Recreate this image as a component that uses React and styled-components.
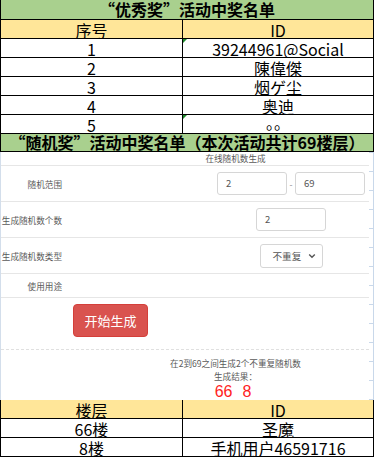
import * as React from 'react'
import styled, { createGlobalStyle } from 'styled-components'

const Global = createGlobalStyle`
    html, body {
        margin: 0;
        padding: 0;
        background: #fff;
    }
    * {
        box-sizing: border-box;
    }
`

const Sheet = styled.div`
    width: 374px;
    font-family: "Noto Sans CJK SC", "Noto Sans", sans-serif;
    color: #000;
`

const Table = styled.div`
    display: grid;
    grid-template-columns: 182px 1fr;
    border-left: 1px solid #000;
    border-right: 1px solid #000;
`

const Title = styled.div`
    grid-column: 1 / -1;
    height: ${p => p.$h}px;
    line-height: ${p => p.$h - 1}px;
    border-bottom: 1px solid #000;
    background: #a9d08e;
    text-align: center;
    font-size: 16px;
    font-weight: 700;
    white-space: nowrap;
`

const Cell = styled.div`
    position: relative;
    height: 19px;
    line-height: ${p => (p.$lift ? 14 : 20)}px;
    border-bottom: 1px solid #000;
    border-right: ${p => (p.$first ? '1px solid #000' : '0')};
    background: ${p => (p.$head ? '#ffe699' : '#fff')};
    text-align: center;
    font-size: 16px;
    white-space: nowrap;
`

const Flag = styled.span`
    position: absolute;
    left: 0;
    top: 0;
    width: 0;
    height: 0;
    border-top: 4px solid #1f8a2c;
    border-right: 4px solid transparent;
`

const Web = styled.div`
    display: flex;
    height: 248px;
    border-right: 1px solid #c9d8ea;
`

const Page = styled.div`
    width: 369px;
    border-left: 1px solid #d3deeb;
    display: flex;
    flex-direction: column;
    font-size: 8.6px;
    color: #5a5a5a;
`

const Gutter = styled.div`
    flex: 1;
    background: linear-gradient(to bottom, transparent 18px, #c9d8ea 18px) 0 1px / 100% 19px repeat-y;
`

const Caption = styled.div`
    height: 14px;
    line-height: 13px;
    border-bottom: 1px solid #e6e6e6;
    padding-left: 101px;
    text-align: center;
`

const Row = styled.div`
    display: flex;
    align-items: center;
    height: ${p => p.$h}px;
    border-bottom: 1px solid #e6e6e6;
`

const Label = styled.div`
    width: 61px;
    text-align: right;
    white-space: nowrap;
`

const Controls = styled.div`
    margin-left: auto;
    width: 156px;
    display: flex;
    align-items: center;
    justify-content: center;
`

const Input = styled.div`
    width: 70px;
    height: 23px;
    line-height: 21px;
    border: 1px solid #d6d6d6;
    border-radius: 3px;
    padding-left: 8px;
    font-size: 9.5px;
    color: #555;
    background: #fff;
`

const Dash = styled.span`
    width: 8px;
    text-align: center;
    color: #888;
`

const Select = styled.div`
    width: 63px;
    height: 24px;
    border: 1px solid #d6d6d6;
    border-radius: 3px;
    display: flex;
    align-items: center;
    padding: 0 6px 0 12px;
    font-size: 9.6px;
    color: #555;
    justify-content: space-between;
`

const ButtonArea = styled.div`
    height: 52px;
    padding: 6px 0 0 72px;
    border-bottom: 1px dashed #e0e0e0;
`

const Button = styled.button`
    width: 75px;
    height: 33px;
    border: 1px solid #d43f3a;
    border-radius: 4px;
    background: #d9534f;
    color: #fff;
    font-family: "Noto Sans CJK SC", sans-serif;
    font-size: 13px;
    padding: 0;
`

const Result = styled.div`
    height: 50px;
    padding: 7px 0 0 101px;
    text-align: center;
    line-height: 13px;
`

const Numbers = styled.div`
    margin-top: 1px;
    display: flex;
    justify-content: center;
    gap: 10px;
    padding-right: 5px;
    font-family: "Liberation Sans", Arial, sans-serif;
    font-size: 16px;
    line-height: 16px;
    color: #f22;
`

const Chevron = () => (
    <svg width="8" height="6" viewBox="0 0 8 6">
        <path d="M1.2 1.5L4 4.2L6.8 1.5" fill="none" stroke="#555" strokeWidth="1.4" />
    </svg>
)

const winners = [
    ['1', '39244961@Social', true],
    ['2', '陳偉傑'],
    ['3', '烟ゲ尘'],
    ['4', '奥迪'],
    ['5', '。。', true, true],
]

const floors = [
    ['66楼', '圣魔'],
    ['8楼', '手机用户46591716'],
]

export default function App() {
    return (
        <Sheet>
            <Global />
            <Table>
                <Title $h={20}>“优秀奖”活动中奖名单</Title>
                <Cell $first $head>序号</Cell>
                <Cell $head>ID</Cell>
                {winners.map(([no, id, flag, lift]) => (
                    <React.Fragment key={no}>
                        <Cell $first>{no}</Cell>
                        <Cell $lift={lift}>
                            {flag && <Flag />}
                            {id}
                        </Cell>
                    </React.Fragment>
                ))}
                <Title $h={18}>“随机奖”活动中奖名单（本次活动共计69楼层）</Title>
            </Table>
            <Web>
                <Page>
                    <Caption>在线随机数生成</Caption>
                    <Row $h={36}>
                        <Label>随机范围</Label>
                        <Controls>
                            <Input>2</Input>
                            <Dash>-</Dash>
                            <Input>69</Input>
                        </Controls>
                    </Row>
                    <Row $h={36}>
                        <Label>生成随机数个数</Label>
                        <Controls>
                            <Input>2</Input>
                        </Controls>
                    </Row>
                    <Row $h={36}>
                        <Label>生成随机数类型</Label>
                        <Controls>
                            <Select>
                                不重复
                                <Chevron />
                            </Select>
                        </Controls>
                    </Row>
                    <Row $h={24}>
                        <Label>使用用途</Label>
                    </Row>
                    <ButtonArea>
                        <Button>开始生成</Button>
                    </ButtonArea>
                    <Result>
                        <div>在2到69之间生成2个不重复随机数</div>
                        <div>生成结果：</div>
                        <Numbers>
                            <span>66</span>
                            <span>8</span>
                        </Numbers>
                    </Result>
                </Page>
                <Gutter />
            </Web>
            <Table>
                <Cell $first $head>楼层</Cell>
                <Cell $head>ID</Cell>
                {floors.map(([floor, id]) => (
                    <React.Fragment key={floor}>
                        <Cell $first>{floor}</Cell>
                        <Cell>{id}</Cell>
                    </React.Fragment>
                ))}
            </Table>
        </Sheet>
    )
}
